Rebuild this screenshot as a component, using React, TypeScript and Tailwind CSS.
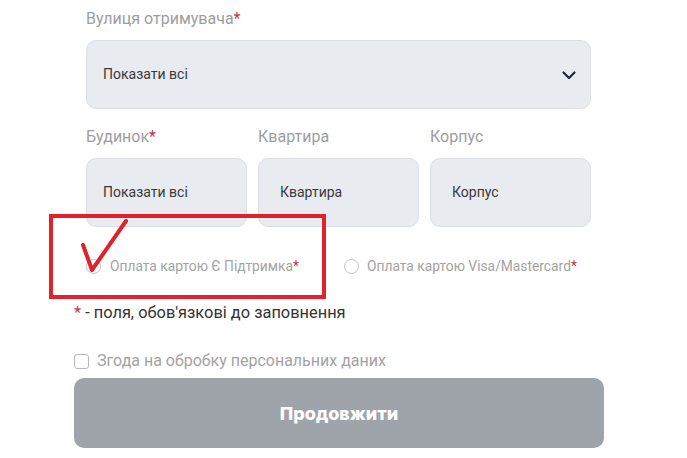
import { useState } from "react";

const labelCls = "text-[16px] leading-[20px] text-[#9e9e9e]";
const boxCls =
  "h-[69px] rounded-[10px] border border-[#dcdfe3] bg-[#e8ebef] flex items-center text-[14px] text-[#3a3a3a]";

function Req() {
  return <span className="text-[#c8323c]">*</span>;
}

function App() {
  const [payment, setPayment] = useState<string>("");
  const [agree, setAgree] = useState(false);

  return (
    <div
      className="relative w-[687px] h-[458px] bg-white overflow-hidden"
      style={{ fontFamily: "Roboto, 'Liberation Sans', sans-serif" }}
    >
      <div className="pl-[74px] w-[604px] pt-[9px]">
        <div className="pl-[12px] pr-[13px]">
          <div className={labelCls}>
            Вулиця отримувача<Req />
          </div>
          <div className={boxCls + " mt-[11px] pl-[16px] pr-[13px] justify-between"}>
            <span>Показати всі</span>
            <svg width="16" height="16" viewBox="0 0 16 16" fill="none">
              <path
                d="M2.5 5.5 8 11l5.5-5.5"
                stroke="#1f2937"
                strokeWidth="2.2"
                strokeLinecap="round"
                strokeLinejoin="round"
              />
            </svg>
          </div>

          <div className="grid grid-cols-3 gap-x-[11px] mt-[18px]">
            <div className={labelCls}>
              Будинок<Req />
            </div>
            <div className={labelCls}>Квартира</div>
            <div className={labelCls}>Корпус</div>
            <div className={boxCls + " mt-[11px] pl-[16px]"}>Показати всі</div>
            <div className={boxCls + " mt-[11px] pl-[21px]"}>Квартира</div>
            <div className={boxCls + " mt-[11px] pl-[21px]"}>Корпус</div>
          </div>

          <div className="flex mt-[29px] h-[20px] items-center text-[13.8px] text-[#a3a3a3]">
            <label className="flex items-center w-[258px] cursor-pointer">
              <span
                onClick={() => setPayment("support")}
                className="w-[15px] h-[15px] rounded-full border border-[#c4c4c4] mr-[9px] flex items-center justify-center"
              >
                {payment === "support" && (
                  <span className="w-[7px] h-[7px] rounded-full bg-[#9e9e9e]" />
                )}
              </span>
              Оплата картою Є Підтримка<Req />
            </label>
            <label className="flex items-center cursor-pointer">
              <span
                onClick={() => setPayment("visa")}
                className="w-[15px] h-[15px] rounded-full border border-[#c4c4c4] mr-[8px] flex items-center justify-center"
              >
                {payment === "visa" && (
                  <span className="w-[7px] h-[7px] rounded-full bg-[#9e9e9e]" />
                )}
              </span>
              Оплата картою Visa/Mastercard<Req />
            </label>
          </div>
        </div>

        <div className="mt-[27px] text-[16.4px] leading-[20px] text-[#333]">
          <Req /> - поля, обов'язкові до заповнення
        </div>

        <label
          className="mt-[28px] flex items-center h-[20px] text-[16px] text-[#a3a3a3] cursor-pointer"
          onClick={() => setAgree(!agree)}
        >
          <span className="w-[15px] h-[15px] rounded-[3px] border border-[#b8b8b8] mr-[8px] flex items-center justify-center text-[11px] leading-none">
            {agree && "✓"}
          </span>
          Згода на обробку персональних даних
        </label>

        <button
          className="mt-[7px] w-[530px] h-[70px] rounded-[10px] bg-[#9fa4aa] text-white text-[18px] font-extrabold flex items-center justify-center"
          style={{ fontFamily: "Inter, 'Open Sans', sans-serif" }}
        >
          Продовжити
        </button>
      </div>

      {/* annotation overlay */}
      <div className="absolute left-[49px] top-[214px] w-[277px] h-[85px] border-4 border-[#e0222c]" />
      <svg
        className="absolute left-[76px] top-[214px]"
        width="58"
        height="62"
        viewBox="0 0 58 62"
        fill="none"
      >
        <path
          d="M7 31 16 56 50 7"
          stroke="#e0222c"
          strokeWidth="4"
          strokeLinecap="round"
          strokeLinejoin="round"
        />
      </svg>
    </div>
  );
}

export default App;
